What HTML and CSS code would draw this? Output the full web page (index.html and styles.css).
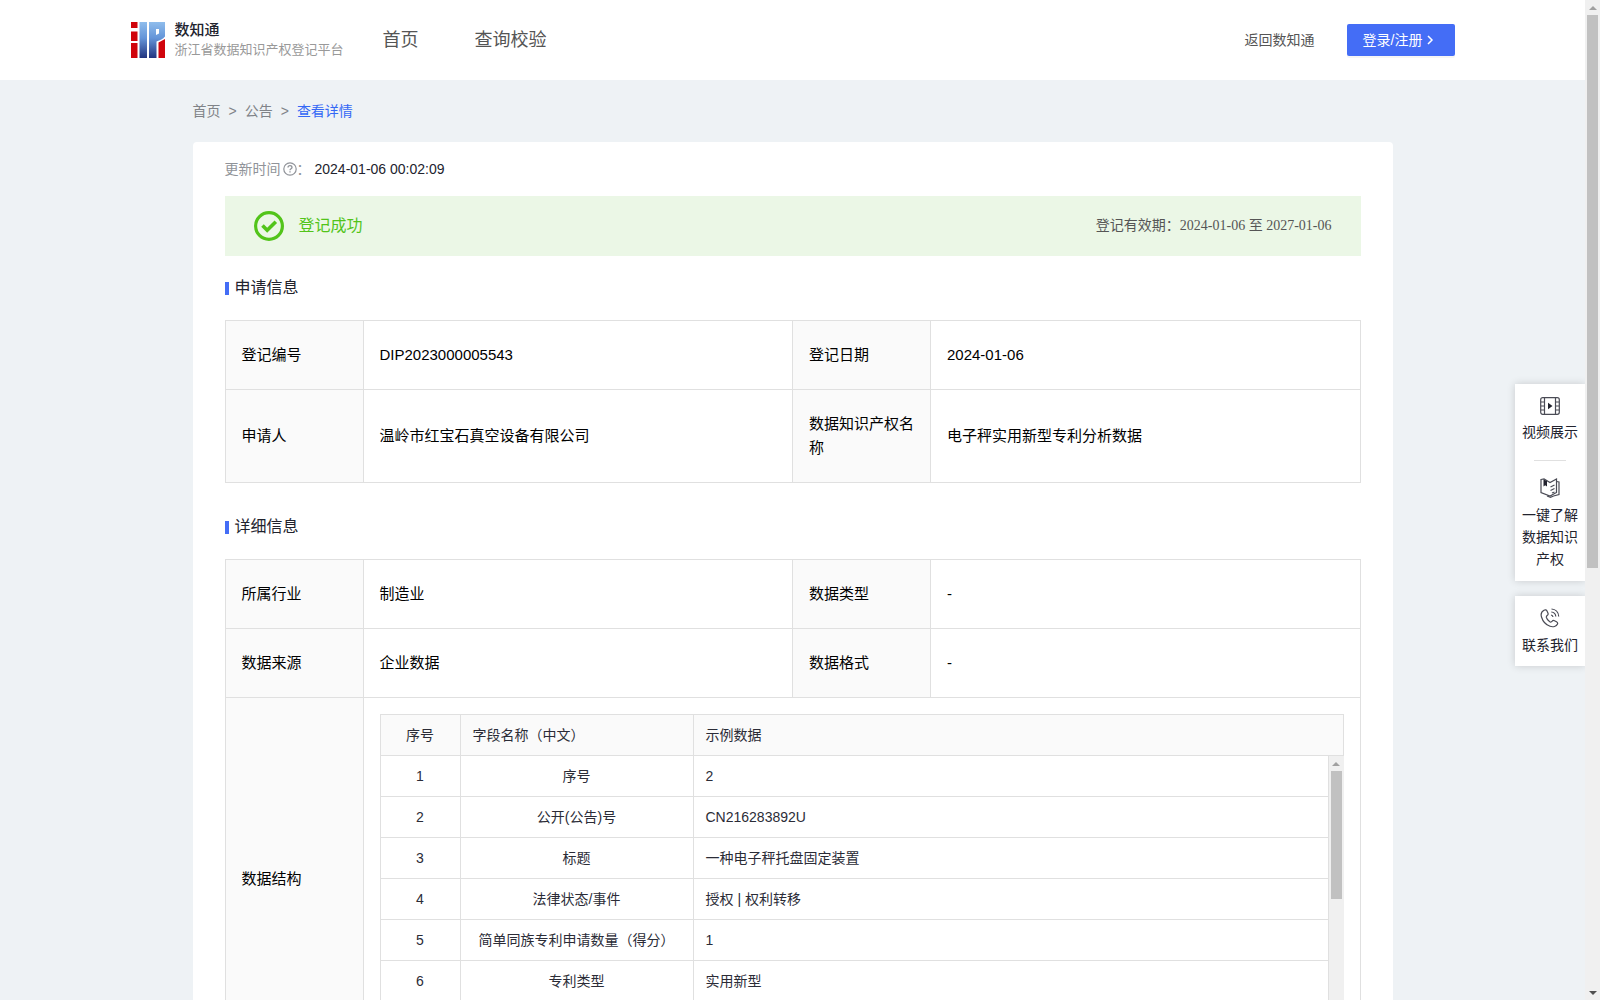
FILE: index.html
```html
<!DOCTYPE html>
<html lang="zh-CN">
<head>
  <meta charset="UTF-8" />
  <meta name="viewport" content="width=device-width, initial-scale=1.0"/>
  <title>查看详情 | 浙江省数据知识产权登记平台</title>
  <link rel="stylesheet" href="styles.css">
</head>
<body>
  <div class="page">
    <header class="header">
      <div class="header-inner">
        <a href="#" class="logo">
          <svg width="34" height="36" viewBox="0 0 34 36" aria-hidden="true">
            <defs>
              <linearGradient id="blue" x1="0" y1="0" x2="0" y2="36" gradientUnits="userSpaceOnUse">
                <stop offset="0" stop-color="#8fbdec"/>
                <stop offset="0.45" stop-color="#6494d8"/>
                <stop offset="1" stop-color="#22347f"/>
              </linearGradient>
            </defs>
            <path fill="#d0040c" d="M0 0h6.500v6H0zM0 9.500h6.500v9.500H0zM0 21h6.500v15H0z"/>
            <path fill="#d0040c" d="M27.500 20.500l6.500-3.500v19h-6.500z"/>
            <path fill="url(#blue)" d="M8.500 0h7.500v36H8.500zM18 0h16v14.500c-2 2.500-5 3.500-8.500 5V36H18zM25 7v6l3-1.500V7z" fill-rule="evenodd"/>
          </svg>
          <span class="logo-text">
            <strong>数知通</strong>
            <small>浙江省数据知识产权登记平台</small>
          </span>
        </a>
        <nav class="nav">
          <a href="#">首页</a>
          <a href="#">查询校验</a>
        </nav>
        <a href="#" class="back">返回数知通</a>
        <button type="button" class="btn-login">登录/注册
          <svg width="8" height="10" viewBox="0 0 8 10" fill="none" stroke="#fff" stroke-width="1.5" aria-hidden="true"><path d="M2 1l4 4-4 4"/></svg>
        </button>
      </div>
    </header>

    <main class="main">
      <nav class="breadcrumb">
        <a href="#">首页</a><span>&gt;</span><a href="#">公告</a><span>&gt;</span><a href="#" class="current">查看详情</a>
      </nav>

      <section class="card">
        <div class="update">
          <span class="update-label">更新时间</span>
          <svg width="14" height="14" viewBox="0 0 14 14" fill="none" stroke="#909399" aria-hidden="true">
            <circle cx="7" cy="7" r="6.2" stroke-width="1.2"/>
            <path d="M5 5.6c0-1.2.9-2 2-2s2 .8 2 1.8c0 1.3-2 1.4-2 2.9" stroke-width="1.3"/>
            <path d="M7 9.3v1.3" stroke-width="1.3"/>
          </svg>
          <span class="update-label">：</span>
          <time>2024-01-06 00:02:09</time>
        </div>

        <div class="status">
          <svg width="30" height="30" viewBox="0 0 30 30" fill="none" stroke="#52c41a" aria-hidden="true">
            <circle cx="15" cy="15" r="13.4" stroke-width="3.2"/>
            <path d="M8.5 14.5l4.700 4.800 8.600-8.600" stroke-width="3.6"/>
          </svg>
          <span class="status-text">登记成功</span>
          <span class="status-date">登记有效期：2024-01-06 至 2027-01-06</span>
        </div>

        <h2 class="title">申请信息</h2>
        <table class="info">
          <colgroup><col class="col-label"><col><col class="col-label"><col></colgroup>
          <tr>
            <th>登记编号</th><td>DIP2023000005543</td>
            <th>登记日期</th><td>2024-01-06</td>
          </tr>
          <tr class="tall">
            <th>申请人</th><td>温岭市红宝石真空设备有限公司</td>
            <th>数据知识产权名称</th><td>电子秤实用新型专利分析数据</td>
          </tr>
        </table>

        <h2 class="title title-next">详细信息</h2>
        <table class="info">
          <colgroup><col class="col-label"><col><col class="col-label"><col></colgroup>
          <tr>
            <th>所属行业</th><td>制造业</td>
            <th>数据类型</th><td>-</td>
          </tr>
          <tr>
            <th>数据来源</th><td>企业数据</td>
            <th>数据格式</th><td>-</td>
          </tr>
          <tr>
            <th>数据结构</th>
            <td colspan="3">
              <div class="fields">
                <table class="grid grid-head">
                  <colgroup><col class="col-no"><col class="col-name"><col></colgroup>
                  <tr><th class="center">序号</th><th>字段名称（中文）</th><th>示例数据</th></tr>
                </table>
                <div class="fields-body">
                  <div class="fields-rows">
                    <table class="grid">
                      <colgroup><col class="col-no"><col class="col-name"><col></colgroup>
                      <tr><td>1</td><td>序号</td><td>2</td></tr>
                      <tr><td>2</td><td>公开(公告)号</td><td>CN216283892U</td></tr>
                      <tr><td>3</td><td>标题</td><td>一种电子秤托盘固定装置</td></tr>
                      <tr><td>4</td><td>法律状态/事件</td><td>授权 | 权利转移</td></tr>
                      <tr><td>5</td><td>简单同族专利申请数量（得分）</td><td>1</td></tr>
                      <tr><td>6</td><td>专利类型</td><td>实用新型</td></tr>
                    </table>
                  </div>
                  <div class="scrollbar">
                    <i class="arrow-up"></i>
                    <i class="thumb thumb-fields"></i>
                  </div>
                </div>
              </div>
            </td>
          </tr>
        </table>
      </section>
    </main>

    <aside class="side">
      <div class="side-box">
        <a href="#" class="side-item">
          <svg width="20" height="18" viewBox="0 0 20 18" fill="none" stroke="#4a4b55" stroke-width="1.2" aria-hidden="true">
            <rect x=".7" y=".7" width="18.6" height="16.6" rx="2"/>
            <path d="M4.5 1v16M15.5 1v16M1 5h3.500M1 9h3.500M1 13h3.500M15.500 5H19M15.500 9H19M15.500 13H19"/>
            <path d="M8 5.800v6.400L12.500 9z" fill="#22232e" stroke="none"/>
          </svg>
          视频展示
        </a>
        <hr>
        <a href="#" class="side-item">
          <svg width="20" height="20" viewBox="0 0 20 20" fill="none" stroke="#4a4b55" stroke-width="1.2" aria-hidden="true">
            <path d="M1 1.500l3-.5 6 3.500L16.500 1v13.500L10 18 1 14.500z"/>
            <path d="M16.500 3.500l2.500.5v12.500L13.500 18l-3 1.300L7 18M10.500 9l4-2M10.500 12.500l4-2M12 15l2.500-1"/>
            <path d="M3.500 1.500v7l1.700-1.300L7 8.500V3z" fill="#22232e" stroke="none"/>
          </svg>
          一键了解数据知识产权
        </a>
      </div>
      <div class="side-box">
        <a href="#" class="side-item">
          <svg width="20" height="20" viewBox="0 0 20 20" fill="none" stroke="#4a4b55" stroke-width="1.2" aria-hidden="true">
            <path d="M4 2.200C1.500 3.500.6 6 1.500 9c1.200 4 4.300 7.800 8.500 9.300 3 1 6.500.2 7.500-2.300.4-1-.1-1.800-1-2.300l-2-1c-1-.5-1.700-.3-2.300.5-.8 1-1.700 1.200-2.700.4C8 12.500 6.900 11 6.400 9.500c-.3-1 .2-1.600 1-2.200.7-.5.9-1.200.6-2l-1-2.300C6.500 1.900 5.300 1.500 4 2.200z"/>
            <path d="M11.500 1c4 .3 7 3.300 7.200 7.500M11.300 4c2.600.2 4.300 1.900 4.500 4.500M11 7c1.200.1 1.800.7 2 2"/>
          </svg>
          联系我们
        </a>
      </div>
    </aside>
  </div>

  <div class="scrollbar scrollbar-page">
    <i class="arrow-up"></i>
    <i class="thumb thumb-page"></i>
    <i class="arrow-down"></i>
  </div>
</body>
</html>
```
FILE: styles.css
```css
* {
  box-sizing: border-box;
}

body {
  margin: 0;
  height: 100vh;
  overflow: hidden;
  display: flex;
  background: #eef2f5;
  color: #22232e;
  font-family: "Liberation Sans", "Noto Sans CJK SC", sans-serif;
  font-size: 14px;
  line-height: 22px;
}

a {
  color: inherit;
  text-decoration: none;
}

svg {
  display: block;
  flex: none;
}

.page {
  flex: 1;
  position: relative;
  overflow: hidden;
}

/* header */
.header {
  background: #fff;
}

.header-inner {
  max-width: 1324px;
  height: 80px;
  margin: 0 auto;
  display: flex;
  align-items: center;
}

.logo {
  display: flex;
  align-items: center;
  gap: 10px;
  width: 208px;
}

.logo-text strong,
.logo-text small {
  display: block;
  white-space: nowrap;
}

.logo-text strong {
  font-size: 15px;
  font-weight: 500;
  line-height: 20px;
}

.logo-text small {
  color: #999;
  font-size: 13px;
  line-height: 20px;
}

.nav {
  display: flex;
  gap: 56px;
  margin-left: 44px;
  flex: 1;
  color: #555;
  font-size: 18px;
}

.back {
  color: #555;
  margin-right: 32px;
}

.btn-login {
  display: flex;
  align-items: center;
  gap: 4px;
  width: 108px;
  height: 32px;
  padding: 0 16px;
  border: none;
  border-radius: 2px;
  background: #446df6;
  box-shadow: 0 2px 0 rgba(0, 0, 0, 0.04);
  color: #fff;
  font: inherit;
  cursor: pointer;
}

/* content */
.main {
  max-width: 1200px;
  margin: 0 auto;
}

.breadcrumb {
  padding: 20px 0;
  color: #808388;
}

.breadcrumb span {
  margin: 0 8px;
}

.breadcrumb .current {
  color: #3468f5;
}

.card {
  background: #fff;
  border-radius: 4px;
  padding: 16px 32px 32px;
}

.update {
  display: flex;
  align-items: center;
  margin-bottom: 16px;
}

.update svg {
  margin-left: 2px;
}

.update-label {
  color: #909399;
}

.update time {
  margin-left: 4px;
}

.status {
  display: flex;
  align-items: center;
  height: 60px;
  padding: 0 29px;
  background: #ebf7e6;
}

.status-text {
  margin-left: 15px;
  color: #52c41a;
  font-size: 16px;
}

.status-date {
  margin-left: auto;
  color: #555;
  font-family: "Liberation Serif", "Noto Sans CJK SC", serif;
}

.title {
  display: flex;
  align-items: center;
  gap: 6px;
  margin: 20px 0;
  font-size: 16px;
  font-weight: normal;
  line-height: 24px;
}

.title::before {
  content: "";
  width: 4px;
  height: 13px;
  background: #446df6;
}

.title-next {
  margin-top: 32px;
}

.info,
.grid {
  width: 100%;
  table-layout: fixed;
  border-collapse: collapse;
}

.info {
  color: #000;
  font-size: 15px;
  line-height: 24px;
}

.info th,
.info td {
  height: 69px;
  padding: 0 16px;
  border: 1px solid #e0e0e0;
  font-weight: normal;
  text-align: left;
}

.info th {
  background: #fafafa;
}

.info .tall th,
.info .tall td {
  height: 93px;
}

.info .col-label {
  width: 138px;
}

/* field list inside the detail table */
.fields {
  padding: 16px 0;
}

.info .grid {
  color: #2b2c37;
  font-size: 14px;
  line-height: 22px;
}

.info .grid th,
.info .grid td {
  height: 41px;
  padding: 0 12px;
}

.info .grid .center,
.info .grid td:nth-child(-n+2) {
  text-align: center;
}

.col-no {
  width: 80px;
}

.col-name {
  width: 233px;
}

.fields-body {
  display: flex;
  height: 287px;
  overflow: hidden;
}

.fields-rows {
  flex: 1;
}

/* first row shares its top line with the header */
.fields-rows .grid {
  margin-top: -1px;
}

/* scrollbars */
.scrollbar {
  display: flex;
  flex-direction: column;
  align-items: center;
  width: 15px;
  background: #f0f0f0;
}

.arrow-up,
.arrow-down {
  border: 4px solid transparent;
  border-top: none;
  border-bottom-color: #a0a0a0;
  margin: 6px 0 5px;
}

.arrow-down {
  border-top: 4px solid #505050;
  border-bottom: none;
  margin-top: auto;
}

.thumb {
  width: 11px;
  background: #c1c1c1;
}

.thumb-fields {
  height: 128px;
}

.thumb-page {
  height: calc((100vh - 30px) * 0.57);
}

/* floating side menu */
.side {
  position: absolute;
  top: 384px;
  right: 0;
  width: 70px;
  display: flex;
  flex-direction: column;
  gap: 15px;
}

.side-box {
  padding: 13px 7px 11px;
  background: #fff;
  box-shadow: 0 0 8px rgba(0, 0, 0, 0.16);
}

.side-box:last-child {
  padding: 12px 7px 10px;
}

.side-item {
  display: flex;
  flex-direction: column;
  align-items: center;
  gap: 6px;
  text-align: center;
}

.side hr {
  width: 32px;
  margin: 17px auto;
  border: none;
  border-top: 1px solid #e0e0e0;
}
```
